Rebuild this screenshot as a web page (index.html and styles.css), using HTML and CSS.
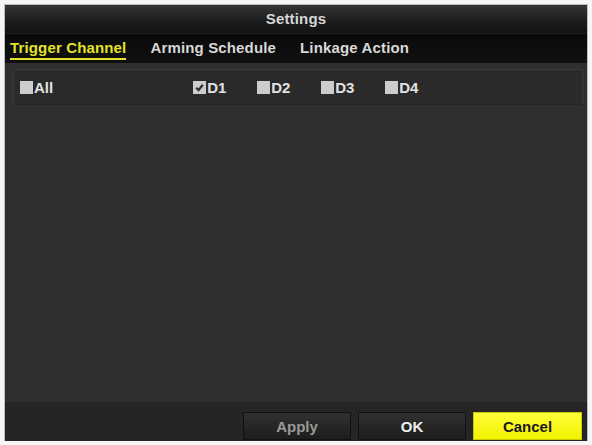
FILE: index.html
```html
<!DOCTYPE html>
<html>
<head>
<meta charset="utf-8">
<link rel="stylesheet" href="styles.css">
</head>
<body>
<div class="window">
  <div class="titlebar">Settings</div>
  <div class="tabs">
    <span class="tab active">Trigger Channel</span>
    <span class="tab">Arming Schedule</span>
    <span class="tab">Linkage Action</span>
  </div>
  <div class="content">
    <div class="row">
      <label class="item all"><span class="box"></span>All</label>
      <div class="channels">
        <label class="item"><span class="box checked"><svg viewBox="0 0 13 13" width="13" height="13"><path d="M3.2 6.8 L5.6 9.2 L9.8 3.8" fill="none" stroke="#2b2b2b" stroke-width="2.2"/></svg></span>D1</label>
        <label class="item"><span class="box"></span>D2</label>
        <label class="item"><span class="box"></span>D3</label>
        <label class="item"><span class="box"></span>D4</label>
      </div>
    </div>
  </div>
  <div class="footer">
    <button class="btn disabled">Apply</button>
    <button class="btn">OK</button>
    <button class="btn primary">Cancel</button>
  </div>
</div>
</body>
</html>
```

FILE: styles.css
```css
html, body {
  margin: 0;
  padding: 0;
  background: #f6f6f6;
}
body {
  padding: 5px 0 0 5px;
  font-family: "Liberation Sans", Arial, sans-serif;
  font-weight: bold;
  font-size: 15px;
  letter-spacing: 0.15px;
}
.window {
  width: 582px;
  height: 436px;
  display: flex;
  flex-direction: column;
  background: #2f2f2f;
  box-shadow: 0 0 0 1px #bdbdbd;
}
.titlebar {
  height: 28px;
  line-height: 27px;
  text-align: center;
  color: #d6d6d6;
  background: linear-gradient(#343434, #1c1c1c 60%, #121212);
}
.tabs {
  height: 30px;
  display: flex;
  gap: 24px;
  padding-left: 5px;
  background: linear-gradient(#0a0a0a, #101010);
  border-top: 1px solid #1e1e1e;
  box-sizing: border-box;
}
.tab {
  color: #d8d8d8;
  padding-top: 5px;
  height: 19px;
  line-height: 17px;
}
.tab.active {
  color: #e2e22a;
  border-bottom: 2px solid #e2e22a;
}
.content {
  flex: 1;
  padding: 6px 4px 0 8px;
  background: #2f2f2f;
}
.row {
  height: 36px;
  box-sizing: border-box;
  border: 1px solid #3a3a3a;
  border-bottom-color: #252525;
  background: #2a2a2a;
  display: flex;
  align-items: center;
  padding-left: 6px;
}
.item {
  display: flex;
  align-items: center;
  color: #e2e2e2;
  font-size: 15px;
  letter-spacing: 0;
}
.channels {
  display: flex;
  margin-left: 140px;
}
.channels .item {
  width: 64px;
}
.box {
  width: 13px;
  height: 13px;
  background: #cdcdcd;
  margin-right: 1px;
  display: flex;
}
.footer {
  height: 39px;
  background: #252525;
  display: flex;
  justify-content: flex-end;
  align-items: flex-end;
  gap: 7px;
  padding-right: 5px;
  padding-bottom: 1px;
  box-sizing: border-box;
}
.btn {
  width: 108px;
  height: 28px;
  font: inherit;
  font-size: 15px;
  color: #eeeeee;
  border: 1px solid #111;
  background: linear-gradient(#303030, #1d1d1d);
  padding: 0;
}
.btn.disabled {
  color: #9a9a9a;
}
.btn.primary {
  width: 109px;
  color: #1a1a1a;
  background: linear-gradient(#ffff3a, #f2f200);
  border-color: #c9c900;
}
```
